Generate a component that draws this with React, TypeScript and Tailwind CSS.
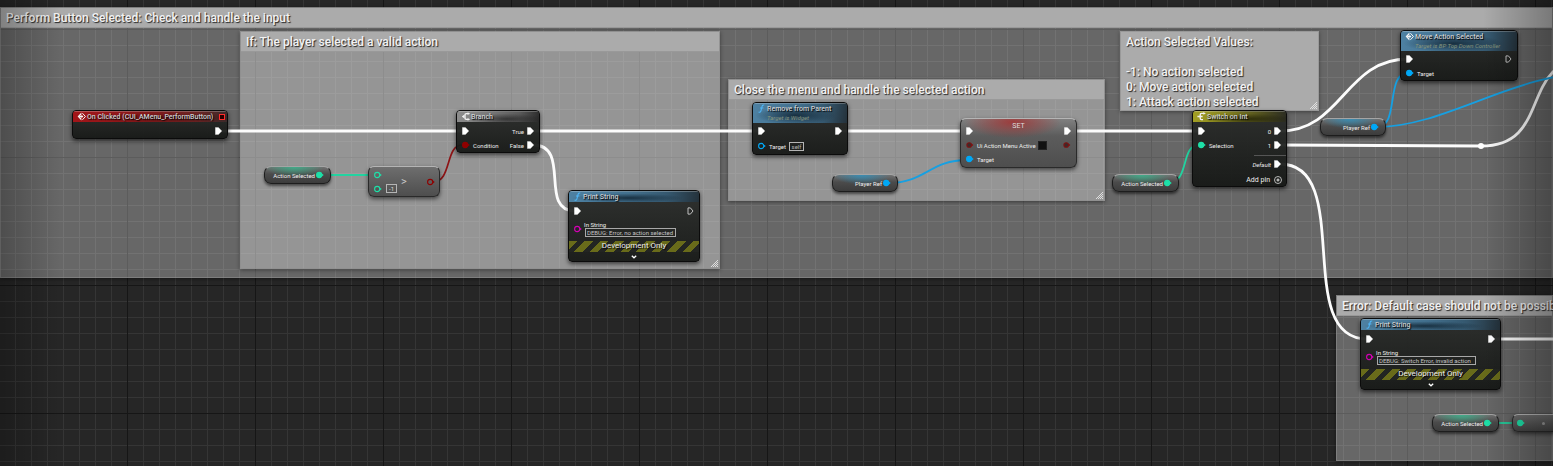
import React, { useId } from "react";

type Tone = "exec" | "bool" | "int" | "object" | "string";

const toneColor: Record<Tone, string> = {
  exec: "#ffffff",
  bool: "#8f0000",
  int: "#1ee0a8",
  object: "#00a8f6",
  string: "#d400b4",
};

function ExecPin({ open = false }: { open?: boolean }) {
  return (
    <svg viewBox="0 0 7 8" className="h-2 w-[7px] shrink-0">
      <path
        d={open ? "M1 .9h2.4L6 4 3.4 7.1H1z" : "M.4.4h3L6.8 4 3.4 7.6h-3z"}
        fill={open ? "none" : "#fff"}
        stroke={open ? "#d0d0d0" : "#fff"}
        strokeWidth={open ? 0.9 : 0.3}
      />
    </svg>
  );
}

function DataPin({ tone, filled = true }: { tone: Tone; filled?: boolean }) {
  const color = toneColor[tone];
  return (
    <svg viewBox="0 0 8 8" className="size-2 shrink-0">
      <path d="M5.6 2.6 7.8 4 5.6 5.4z" fill={color} />
      <circle cx="3.2" cy="4" r={2.6} fill={filled ? color : "none"} stroke={color} strokeWidth="1.1" />
    </svg>
  );
}

function DarkPin() {
  return (
    <svg viewBox="0 0 8 8" className="size-2 shrink-0">
      <path d="M5.6 2.8 7.4 4 5.6 5.2z" fill="#8f0000" />
      <circle cx="3.2" cy="4" r="2.3" fill="#3c2a2a" stroke="#7c1212" strokeWidth="1.1" />
    </svg>
  );
}

function EventIcon() {
  return (
    <svg viewBox="0 0 9 9" className="h-[9px] w-[9px] shrink-0">
      <path d="M4.4.6.6 4.5l3.8 3.9V6.6L2.6 4.5l1.8-2.1z" fill="#f4f4f4" />
      <path d="M5.4 1.2l3 3.3-3 3.3" fill="none" stroke="#f4f4f4" strokeWidth="1" />
      <path d="M2.6 4h1.8V2.8L6.4 4.5 4.4 6.2V5H2.6z" fill="#f4f4f4" />
    </svg>
  );
}

function BranchIcon() {
  return (
    <svg viewBox="0 0 9 9" className="h-[9px] w-[9px] shrink-0">
      <path d="M8.4 1.6H5.2Q4 1.6 4 3v3q0 1.4 1.2 1.4h3.2" fill="none" stroke="#f0f0f0" strokeWidth="1.4" />
      <path d="M3.4 2.6v3.8L.8 4.5z" fill="#f0f0f0" />
      <path d="M6.6.2 8.8 1.6 6.6 3zM6.6 6l2.2 1.4-2.2 1.4z" fill="#f0f0f0" />
    </svg>
  );
}

function SwitchIcon() {
  return (
    <svg viewBox="0 0 9 9" className="h-[9px] w-[9px] shrink-0">
      <path d="M7 1.4H4.4Q3.2 1.4 3.2 3v3q0 1.6 1.2 1.6H6M.4 4.5h5.2" fill="none" stroke="#f0f0f0" strokeWidth="1.4" />
      <path d="M6.4 0 8.8 1.4 6.4 2.8z" fill="#f0f0f0" />
    </svg>
  );
}

function FunctionIcon() {
  return (
    <svg viewBox="0 0 9 9" className="h-[9px] w-[9px] shrink-0">
      <path d="M7.2 1.2C5.6.4 5.2 1.8 4.8 3.4L4 6.6C3.7 8 3 8.6 1.6 8M3 4h3.4" fill="none" stroke="#4fb4f4" strokeWidth="1.1" />
    </svg>
  );
}

function Grip() {
  return (
    <svg viewBox="0 0 8 8" className="absolute right-px bottom-px size-2">
      <path d="M1 8 8 1M3 8l5-5M5 8l3-3M7 8l1-1" stroke="#e6e6e6" strokeWidth=".9" />
    </svg>
  );
}

function Comment({ title, place, children }: { title: string; place: string; children?: React.ReactNode }) {
  return (
    <section className={`absolute border border-[#8d8d8d]/60 bg-white/30 shadow-[0_1px_4px_rgba(0,0,0,0.45)] ${place}`}>
      <h2 className="h-5 border-b border-[#999] bg-[#ababab] pl-[5px] text-[12px] leading-5 font-medium whitespace-nowrap text-[#f2f2f2] [text-shadow:1px_1px_1px_#222]">
        {title}
      </h2>
      {children}
    </section>
  );
}

const headerTone = {
  red: "bg-[radial-gradient(ellipse_at_60%_60%,rgba(60,6,6,0.5),transparent_60%),linear-gradient(100deg,#a31519,#86191b_45%,#6b2424_80%,#3a2a2a)]",
  gray: "bg-[radial-gradient(ellipse_at_60%_70%,rgba(20,20,20,0.6),transparent_55%),linear-gradient(100deg,#8d8d8d,#777_40%,#5a5a5a_75%,#2a2a2a)]",
  blue: "bg-[radial-gradient(ellipse_at_45%_60%,rgba(10,26,38,0.75),transparent_55%),linear-gradient(100deg,#4e81a2,#43718f_45%,#35586f_75%,#24313a)]",
  olive: "bg-[radial-gradient(ellipse_at_60%_70%,rgba(20,20,0,0.65),transparent_55%),linear-gradient(100deg,#a3a024,#84821f_35%,#55541e_70%,#2a2b22)]",
};

function Node({
  title,
  subtitle,
  icon,
  tone,
  place,
  badge,
  children,
}: {
  title: string;
  subtitle?: string;
  icon: React.ReactNode;
  tone: keyof typeof headerTone;
  place: string;
  badge?: React.ReactNode;
  children: React.ReactNode;
}) {
  return (
    <article
      className={`absolute overflow-hidden rounded-[4px] border border-[#0b0b0b] bg-linear-to-b from-[#2a2c2a]/95 to-[#161816]/95 shadow-[0_2px_4px_rgba(0,0,0,0.6)] ${place}`}
    >
      <header
        className={`flex gap-px border-t border-white/25 pr-[2px] pl-1 ${subtitle ? "h-5" : "h-[11px]"} ${headerTone[tone]}`}
      >
        {icon}
        <div className="min-w-0 flex-1 whitespace-nowrap">
          <h3 className="text-[7px] leading-[10px] font-medium text-[#cdd0d2] [text-shadow:1px_1px_1px_#000]">{title}</h3>
          {subtitle && <p className="text-[6px] leading-[8px] text-[#87957c] italic">{subtitle}</p>}
        </div>
        {badge}
      </header>
      {children}
    </article>
  );
}

function Row({ left, right }: { left?: React.ReactNode; right?: React.ReactNode }) {
  return (
    <div className="flex h-3.5 items-center justify-between px-[5px]">
      <div className="flex items-center gap-[3px]">{left}</div>
      <div className="flex items-center gap-[3px]">{right}</div>
    </div>
  );
}

function Variable({ name, tone, place }: { name: string; tone: "int" | "object"; place: string }) {
  const glow =
    tone === "int"
      ? "bg-[radial-gradient(ellipse_45%_60%_at_45%_0%,rgba(50,190,145,0.75),transparent),linear-gradient(#717171,#4b4b4b_45%,#3c3c3c)]"
      : "bg-[radial-gradient(ellipse_45%_60%_at_45%_0%,rgba(40,150,200,0.75),transparent),linear-gradient(#717171,#4b4b4b_45%,#3c3c3c)]";
  return (
    <div
      className={`absolute flex h-[18px] items-center justify-end gap-px rounded-[7px] border border-[#1d1d1d] border-t-[#a5a5a5] pr-[6px] text-[6px] text-[#f0f0f0] shadow-[0_2px_3px_rgba(0,0,0,0.55)] ${glow} ${place}`}
    >
      <span className="whitespace-nowrap">{name}</span>
      <DataPin tone={tone} />
    </div>
  );
}

function PrintString({ message, connected, place, field }: { message: string; connected?: boolean; place: string; field: string }) {
  const id = useId();
  return (
    <Node title="Print String" icon={<FunctionIcon />} tone="blue" place={place}>
      <div className="pt-[2px]">
        <Row left={<ExecPin />} right={<ExecPin open={!connected} />} />
      </div>
      <div className="flex items-center gap-[2px] pt-[3px] pl-[5px]">
        <DataPin tone="string" filled={false} />
        <div className="flex flex-col">
          <label htmlFor={id} className="text-[6px] leading-[7px] text-[#eee]">
            In String
          </label>
          <input
            id={id}
            defaultValue={message}
            className={`ml-px h-[9px] border border-[#a8a8a8] bg-transparent px-px text-[6px] leading-[7px] text-[#c4c4c4] ${field}`}
          />
        </div>
      </div>
      <div className="mt-[4px] h-[11px] bg-[repeating-linear-gradient(135deg,#696b1a_0_6px,#232522_6px_11px)] text-center text-[8px] leading-[10px] text-[#eee] [text-shadow:1px_1px_1px_#000]">
        Development Only
      </div>
      <button type="button" aria-label="Show advanced pins" className="flex h-[9px] w-full items-center justify-center">
        <svg viewBox="0 0 6 4" className="h-1 w-1.5">
          <path d="M.8.8 3 2.8 5.2.8" fill="none" stroke="#fff" strokeWidth="1.3" />
        </svg>
      </button>
    </Node>
  );
}

const glass =
  "rounded-[6px] border border-[#2a2a2a] border-t-[#b5b5b5] shadow-[0_2px_4px_rgba(0,0,0,0.55)]";

function Wires() {
  return (
    <svg className="absolute inset-0 h-full w-full" fill="none">
      <g stroke="#fcfcfc" strokeWidth="2.8">
        <path d="M220 131H465M532 131H760M840 131H970M1068 131H1200" />
        <path d="M1280 131C1342 131 1345 59 1408 59" />
        <path d="M1280 145 1481 146C1554 146 1517 59 1590 59" />
        <path d="M1280 164C1355 164 1292 339 1367 339" />
        <path d="M533 145C572 145 538 211 575 211" />
        <path d="M1494 339H1800" />
      </g>
      <circle cx="1481" cy="146" r="3" fill="#fff" />
      <path d="M433 182C452 182 445 145 462 145" stroke="#8d1416" strokeWidth="1.7" />
      <g stroke="#22d3a0" strokeWidth="1.8">
        <path d="M320 175H375" />
        <path d="M1168 183C1190 183 1180 145 1199 145" />
        <path d="M1488 423H1520" />
      </g>
      <g stroke="#16a0e2" strokeWidth="1.8">
        <path d="M889 183C925 183 930 160 967 160" />
        <path d="M1377 127C1400 127 1385 73 1408 73" />
        <path d="M1377 127C1445 127 1515 72 1600 72" />
      </g>
    </svg>
  );
}

export default function App() {
  return (
    <main className="relative min-h-screen w-full overflow-hidden bg-[#262626] bg-[linear-gradient(#161616_1px,transparent_1px),linear-gradient(90deg,#161616_1px,transparent_1px),linear-gradient(#353535_1px,transparent_1px),linear-gradient(90deg,#353535_1px,transparent_1px)] bg-[size:128px_128px,128px_128px,16px_16px,16px_16px] bg-[position:0_29px,127px_0,0_13px,15px_0] font-['Roboto',sans-serif]">
      <Comment
        title="Perform Button Selected: Check and handle the input"
        place="inset-x-0 top-[7px] h-[271px]"
      />
      <Comment title="If: The player selected a valid action" place="top-[31px] left-[240px] h-[238px] w-[480px]">
        <Grip />
      </Comment>
      <Comment
        title="Close the menu and handle the selected action"
        place="top-[79px] left-[728px] h-[122px] w-[377px]"
      >
        <Grip />
      </Comment>
      <Comment
        title="Error: Default case should not be possib"
        place="top-[295px] right-0 left-[1336px] h-[166px]"
      />
      <section className="absolute top-[31px] left-[1120px] w-[199px] border border-[#999] bg-[#ababab] pt-[3px] pl-[5px] text-[12px] leading-[15px] font-medium text-[#f2f2f2] shadow-[0_1px_4px_rgba(0,0,0,0.4)] [text-shadow:1px_1px_1px_#222]">
        <h2>Action Selected Values:</h2>
        <p className="pt-[15px]">-1: No action selected</p>
        <p>0: Move action selected</p>
        <p>1: Attack action selected</p>
        <Grip />
      </section>

      <Wires />

      <Node
        title="On Clicked (CUI_AMenu_PerformButton)"
        icon={<EventIcon />}
        tone="red"
        place="top-[110px] left-[72px] w-[156px]"
        badge={<span className="mt-[2px] size-[6px] border border-[#ff2a2a] bg-[#2a0000]" />}
      >
        <div className="pt-[2px]">
          <Row right={<ExecPin />} />
        </div>
      </Node>

      <Node title="Branch" icon={<BranchIcon />} tone="gray" place="top-[110px] left-[456px] w-[84px]">
        <div className="pt-[2px] text-[6px] text-[#eee]">
          <Row left={<ExecPin />} right={<>True<ExecPin /></>} />
          <Row left={<><DataPin tone="bool" />Condition</>} right={<>False<ExecPin /></>} />
        </div>
      </Node>

      <Variable name="Action Selected" tone="int" place="top-[166px] left-[264px] w-[67px]" />

      <div className={`absolute top-[166px] left-[368px] flex h-[31px] w-[72px] items-center justify-between bg-linear-to-b from-[#6e6e6e] to-[#4e4e4e] pl-[5px] ${glass}`}>
        <div className="flex flex-col text-[6px] text-[#ddd]">
          <div className="flex h-3.5 items-center">
            <DataPin tone="int" filled={false} />
          </div>
          <div className="flex h-3.5 items-center gap-1">
            <DataPin tone="int" filled={false} />
            <input aria-label="Compare value" defaultValue="-1" className="h-[9px] w-[11px] border border-[#b5b5b5] bg-transparent text-center text-[6px] leading-[7px]" />
          </div>
        </div>
        <span className="text-[11px] leading-3 text-[#c8c8c8]">&gt;</span>
        <div className="pr-1 pl-4">
          <DataPin tone="bool" filled={false} />
        </div>
      </div>

      <PrintString
        message="DEBUG: Error, no action selected"
        place="top-[190px] left-[568px] w-[132px]"
        field="w-[91px]"
      />

      <Node
        title="Remove from Parent"
        subtitle="Target is Widget"
        icon={<FunctionIcon />}
        tone="blue"
        place="top-[102px] left-[752px] w-[96px]"
      >
        <div className="pt-px pb-px text-[6px] text-[#eee]">
          <Row left={<ExecPin />} right={<ExecPin />} />
          <div className="pt-px">
            <Row
              left={
                <>
                  <DataPin tone="object" filled={false} />
                  <label htmlFor="remove-target">Target</label>
                  <input id="remove-target" readOnly value="self" className="h-[9px] w-[15px] border border-[#b5b5b5] bg-transparent text-center text-[6px] leading-[7px] text-[#b5b5b5]" />
                </>
              }
            />
          </div>
        </div>
      </Node>

      <Variable name="Player Ref" tone="object" place="top-[174px] left-[832px] w-[66px]" />

      <article className={`absolute top-[118px] left-[960px] w-[117px] bg-[radial-gradient(ellipse_42%_34%_at_45%_6%,rgba(165,45,45,0.8),transparent),linear-gradient(#808080,#5c5c5c_35%,#4e4e4e)] pt-px pb-px text-[6px] text-[#eee] ${glass}`}>
        <div className="flex h-[18px] items-end justify-between px-[5px] pb-[3px]">
          <ExecPin />
          <h3 className="self-start text-[7px] leading-[12px] text-[#ddd]">SET</h3>
          <ExecPin />
        </div>
        <Row
          left={
            <>
              <DarkPin />
              <label htmlFor="menu-active">Ui Action Menu Active</label>
              <input id="menu-active" type="checkbox" className="-ml-px size-[9px] appearance-none border border-[#222] bg-[#111]" />
            </>
          }
          right={<DarkPin />}
        />
        <Row left={<><DataPin tone="object" />Target</>} />
      </article>

      <Variable name="Action Selected" tone="int" place="top-[174px] left-[1112px] w-[67px]" />

      <Node title="Switch on Int" icon={<SwitchIcon />} tone="olive" place="top-[110px] left-[1192px] w-[95px]">
        <div className="pt-[2px] text-[6px] text-[#eee]">
          <Row left={<ExecPin />} right={<>0<ExecPin /></>} />
          <Row left={<><DataPin tone="int" />Selection</>} right={<>1<ExecPin /></>} />
          <hr className="mt-[3px] mb-px ml-auto w-8 border-[#555]" />
          <Row right={<><i>Default</i><ExecPin /></>} />
          <button type="button" className="mt-[3px] ml-auto flex h-3 items-center gap-1 pr-[4px] text-[7px] leading-3">
            Add pin
            <svg viewBox="0 0 8 8" className="size-2">
              <circle cx="4" cy="4" r="3.5" fill="none" stroke="#ddd" strokeWidth=".8" />
              <path d="M4 2.4v3.2M2.4 4h3.2" stroke="#ddd" strokeWidth="1.2" />
            </svg>
          </button>
        </div>
      </Node>

      <Variable name="Player Ref" tone="object" place="top-[118px] left-[1320px] w-[66px]" />

      <Node
        title="Move Action Selected"
        subtitle="Target is BP Top Down Controller"
        icon={<EventIcon />}
        tone="blue"
        place="top-[30px] left-[1400px] w-[118px]"
      >
        <div className="pt-px text-[6px] text-[#eee]">
          <Row left={<ExecPin />} right={<ExecPin open />} />
          <Row left={<><DataPin tone="object" />Target</>} />
        </div>
      </Node>

      <PrintString
        message="DEBUG: Switch Error, invalid action"
        connected
        place="top-[318px] left-[1360px] w-[141px]"
        field="w-[99px]"
      />

      <Variable name="Action Selected" tone="int" place="top-[414px] left-[1432px] w-[67px]" />
      <div className={`absolute top-[414px] left-[1512px] flex h-[18px] w-[72px] items-center gap-5 bg-linear-to-b from-[#6e6e6e] to-[#444] pl-1 ${glass}`}>
        <DataPin tone="int" />
        <span className="-ml-[3px] size-[3px] rounded-full bg-[#999]" />
      </div>

      <div className="pointer-events-none absolute inset-y-0 left-0 w-[60px] bg-linear-to-r from-black/25 to-transparent" />
      <div className="pointer-events-none absolute inset-y-0 right-0 w-[70px] bg-linear-to-l from-black/30 to-transparent" />
    </main>
  );
}
